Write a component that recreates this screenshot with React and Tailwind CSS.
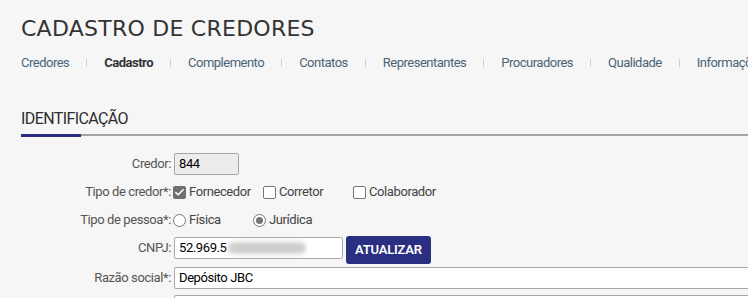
import { Check } from 'lucide-react';

const tabs = [
  'Credores',
  'Cadastro',
  'Complemento',
  'Contatos',
  'Representantes',
  'Procuradores',
  'Qualidade',
  'Informações',
];

function CheckOption({ label, checked }) {
  return (
    <div className="flex w-[90px] shrink-0 items-center gap-[3px]">
      {checked ? (
        <span className="ml-px flex h-[13px] w-[13px] items-center justify-center rounded-[2px] bg-[#707070]">
          <Check className="h-[11px] w-[11px] text-white" strokeWidth={3.5} />
        </span>
      ) : (
        <span className="ml-px h-[13px] w-[13px] rounded-[2px] border border-[#767676] bg-white" />
      )}
      <span>{label}</span>
    </div>
  );
}

function RadioOption({ label, checked }) {
  return (
    <div className="flex w-[80px] shrink-0 items-center gap-[3px]">
      <span className="ml-px flex h-[13px] w-[13px] items-center justify-center rounded-full border border-[#767676] bg-white">
        {checked && <span className="h-[7px] w-[7px] rounded-full bg-[#767676]" />}
      </span>
      <span>{label}</span>
    </div>
  );
}

function Label({ children, className = '' }) {
  return (
    <div className={`w-[172px] shrink-0 pr-[1px] text-right text-[#555] ${className}`}>{children}</div>
  );
}

export default function App() {
  return (
    <div className="h-[298px] w-[748px] overflow-hidden bg-[#f6f6f6] font-['Roboto',sans-serif]">
      {/* Header */}
      <div className="pl-[21px] pt-[16px]">
        <h1 className="whitespace-nowrap font-['DejaVu_Sans',sans-serif] text-[22px] leading-[26px] font-normal tracking-[0.25px] text-[#333]">
          CADASTRO DE CREDORES
        </h1>
        <nav className="mt-[13px] flex items-center gap-[17px] whitespace-nowrap text-[13px] leading-[16px] tracking-[-0.5px]">
          {tabs.map((tab, i) => (
            <div key={tab} className="flex items-center gap-[17px]">
              {i > 0 && <span className="h-[8px] w-px bg-[#d0d0d0]" />}
              <span className={tab === 'Cadastro' ? 'font-bold text-[#333]' : 'text-[#4a6478]'}>{tab}</span>
            </div>
          ))}
        </nav>
      </div>

      {/* Section title */}
      <div className="ml-[21px] mt-[38px]">
        <h2 className="text-[16px] leading-[19px] tracking-[-0.6px] text-[#2d2d2d]">IDENTIFICAÇÃO</h2>
        <div className="mt-[6px] h-[2px] bg-[#a3a3a3]">
          <div className="h-[3px] w-[60px] bg-[#2b2e80]" />
        </div>
      </div>

      {/* Form */}
      <div className="mt-[14px] text-[13px] leading-[16px] tracking-[-0.4px]">
        <div className="flex h-[28px] items-center">
          <Label>Credor:</Label>
          <div className="ml-[2px] flex h-[22px] w-[65px] items-center rounded-[2px] border border-[#a8a8a8] bg-[#ececec] px-[4px] text-black">
            844
          </div>
        </div>

        <div className="flex h-[28px] items-center">
          <Label>Tipo de credor*:</Label>
          <div className="flex text-[#444]">
            <CheckOption label="Fornecedor" checked />
            <CheckOption label="Corretor" />
            <CheckOption label="Colaborador" />
          </div>
        </div>

        <div className="flex h-[28px] items-center">
          <Label>Tipo de pessoa*:</Label>
          <div className="flex text-[#444]">
            <RadioOption label="Física" />
            <RadioOption label="Jurídica" checked />
          </div>
        </div>

        <div className="flex h-[30px] items-start">
          <Label className="mt-[6px]">CNPJ:</Label>
          <div className="ml-[2px] mt-[3px] flex h-[22px] w-[169px] items-center overflow-hidden rounded-[2px] border border-[#a8a8a8] bg-white px-[4px] text-black">
            <span>52.969.5</span>
            <span className="ml-px h-[12px] w-[78px] rounded-full bg-[#cfcfcf] blur-[2px]" />
          </div>
          <button
            type="button"
            className="ml-[3px] mt-[2px] h-[28px] w-[85px] rounded-[3px] bg-[#2b2f82] text-[13px] font-semibold tracking-[-0.2px] text-white"
          >
            ATUALIZAR
          </button>
        </div>

        <div className="flex h-[25px] items-start">
          <Label className="mt-[6px]">Razão social*:</Label>
          <div className="ml-[2px] mt-[3px] flex h-[22px] flex-1 items-center rounded-l-[2px] border border-r-0 border-[#a8a8a8] bg-white px-[4px] text-black">
            Depósito JBC
          </div>
        </div>

        <div className="mt-[6px] flex">
          <div className="w-[174px] shrink-0" />
          <div className="h-[22px] flex-1 rounded-l-[2px] border border-r-0 border-[#a8a8a8] bg-white" />
        </div>
      </div>
    </div>
  );
}
